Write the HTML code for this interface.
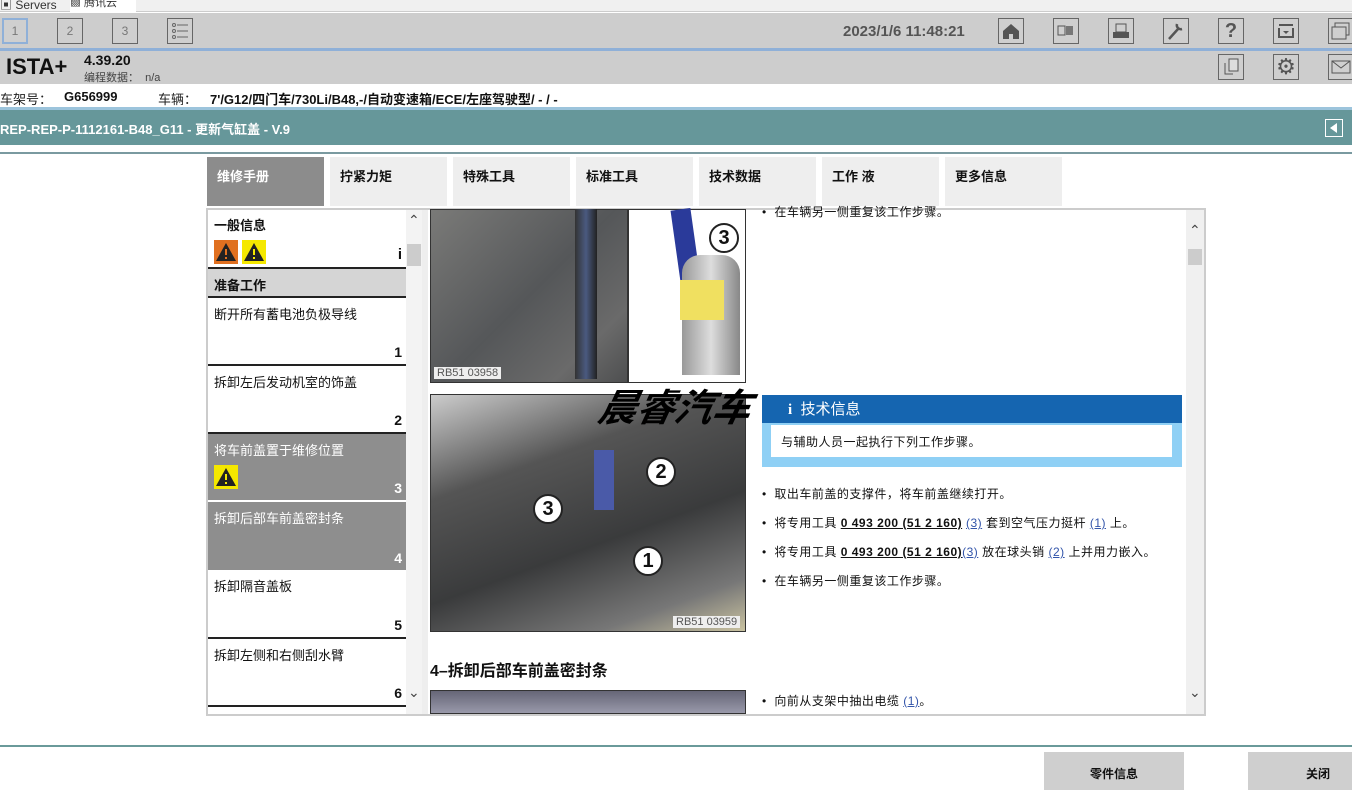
<!DOCTYPE html>
<html><head><meta charset="utf-8"><style>
*{margin:0;padding:0;box-sizing:border-box}
body{width:1352px;height:790px;overflow:hidden;background:#fff;position:relative;font-family:"Liberation Sans","Noto Sans CJK SC",sans-serif;color:#111}
.a{position:absolute}
.ib{position:absolute;width:26px;height:26px;border:1px solid #666;background:#cfcfcf;top:18px}
.tab{position:absolute;top:157px;height:49px;width:117px;background:#eee;font-size:13px;font-weight:bold;padding:9px 10px}
.li{position:absolute;left:208px;width:198px;font-size:13px;padding:6px 6px;border-bottom:2px solid #222}
.num{position:absolute;right:4px;bottom:4px;font-weight:bold;font-size:14px}
.warn{width:24px;height:24px;display:inline-block;position:relative}
.txt{position:absolute;left:762px;font-size:12px;letter-spacing:.5px}
.lk{color:#35a;text-decoration:underline}
.u{font-weight:bold;text-decoration:underline}
.circ{position:absolute;width:30px;height:30px;border:2px solid #222;border-radius:50%;background:#fff;font-size:20px;font-weight:bold;text-align:center;line-height:26px}
</style></head><body>
<div class="a" style="left:0;top:0;width:1352px;height:12px;background:#f0f0f0;border-bottom:1px solid #ccc"></div>
<div class="a" style="left:0;top:-4px;font-size:12px;color:#333">&#9635; Servers</div>
<div class="a" style="left:70px;top:0;width:66px;height:12px;background:#fff;font-size:11px;line-height:6px;color:#333">&#9641; 腾讯云</div>
<div class="a" style="left:0;top:13px;width:1352px;height:36px;background:#cdcdcd"></div>
<div class="a" style="left:0;top:48px;width:1352px;height:3px;background:#8fb0d8"></div>
<div class="ib" style="left:2px;border:2px solid #8fb0d8;font-size:12px;text-align:center;line-height:22px;color:#777">1</div>
<div class="ib" style="left:57px;font-size:12px;text-align:center;line-height:24px;color:#777">2</div>
<div class="ib" style="left:112px;font-size:12px;text-align:center;line-height:24px;color:#777">3</div>
<div class="ib" style="left:167px"><svg width="24" height="24"><g stroke="#666" fill="none"><circle cx="6" cy="6" r="1.5"/><circle cx="6" cy="12" r="1.5"/><circle cx="6" cy="18" r="1.5"/><path d="M9 6h11M9 12h11M9 18h11"/></g></svg></div>
<div class="a" style="left:843px;top:23px;font-size:15px;font-weight:bold;color:#555">2023/1/6 11:48:21</div>
<div class="ib" style="left:998px"><svg width="24" height="24"><path d="M4 12L12 5l8 7v8h-6v-5h-4v5H4z" fill="#555"/></svg></div>
<div class="ib" style="left:1053px"><svg width="24" height="24"><rect x="4" y="7" width="7" height="9" fill="none" stroke="#555"/><rect x="12" y="7" width="7" height="9" fill="#777"/></svg></div>
<div class="ib" style="left:1108px"><svg width="24" height="24"><rect x="7" y="5" width="10" height="8" fill="none" stroke="#555"/><rect x="4" y="13" width="16" height="6" fill="#555"/></svg></div>
<div class="ib" style="left:1163px"><svg width="24" height="24"><path d="M5 20L14 10M13 5a4 4 0 0 0 5 5" stroke="#555" stroke-width="2.5" fill="none"/></svg></div>
<div class="ib" style="left:1218px;font-size:20px;font-weight:bold;text-align:center;line-height:24px;color:#555">?</div>
<div class="ib" style="left:1273px"><svg width="24" height="24"><path d="M5 6h14M5 9v9h14V9" stroke="#555" fill="none" stroke-width="2"/><path d="M9 12h6l-3 3z" fill="#555"/></svg></div>
<div class="ib" style="left:1328px"><svg width="24" height="24"><rect x="6" y="4" width="14" height="12" fill="none" stroke="#555"/><rect x="3" y="8" width="14" height="12" fill="#cfcfcf" stroke="#555"/></svg></div>
<div class="a" style="left:0;top:51px;width:1352px;height:33px;background:#cdcdcd"></div>
<div class="a" style="left:6px;top:54px;font-size:22px;font-weight:bold">ISTA+</div>
<div class="a" style="left:84px;top:52px;font-size:14px;font-weight:bold">4.39.20</div>
<div class="a" style="left:84px;top:69px;font-size:11px;color:#444">编程数据： &nbsp;n/a</div>
<div class="ib" style="left:1218px;top:54px"><svg width="24" height="24"><rect x="10" y="4" width="9" height="12" fill="#ddd" stroke="#555"/><path d="M6 8v11h8" stroke="#555" fill="none"/></svg></div>
<div class="ib" style="left:1273px;top:54px;font-size:22px;text-align:center;line-height:24px;color:#555">⚙</div>
<div class="ib" style="left:1328px;top:54px"><svg width="24" height="24"><rect x="3" y="6" width="18" height="12" fill="none" stroke="#555"/><path d="M3 6l9 7 9-7" stroke="#555" fill="none"/></svg></div>
<div class="a" style="left:0;top:89px;font-size:13px;color:#222">车架号：</div>
<div class="a" style="left:64px;top:89px;font-size:13px;font-weight:bold">G656999</div>
<div class="a" style="left:158px;top:89px;font-size:13px;color:#222">车辆：</div>
<div class="a" style="left:210px;top:89px;font-size:13px;font-weight:bold">7'/G12/四门车/730Li/B48,-/自动变速箱/ECE/左座驾驶型/ - / -</div>
<div class="a" style="left:0;top:107px;width:1352px;height:3px;background:#9cc4dc"></div>
<div class="a" style="left:0;top:110px;width:1352px;height:35px;background:#66979a"></div>
<div class="a" style="left:0;top:119px;font-size:13px;font-weight:bold;color:#fff">REP-REP-P-1112161-B48_G11 - 更新气缸盖 - V.9</div>
<div class="a" style="left:1325px;top:119px;width:18px;height:18px;border:1px solid #fff"><svg width="16" height="16"><path d="M11 3v10L4 8z" fill="#fff"/></svg></div>
<div class="a" style="left:0;top:152px;width:1352px;height:2px;background:#7a9aa0"></div>
<div class="tab" style="left:207px;background:#8c8c8c;color:#fff">维修手册</div>
<div class="tab" style="left:330px">拧紧力矩</div>
<div class="tab" style="left:453px">特殊工具</div>
<div class="tab" style="left:576px">标准工具</div>
<div class="tab" style="left:699px">技术数据</div>
<div class="tab" style="left:822px">工作 液</div>
<div class="tab" style="left:945px">更多信息</div>
<div class="a" style="left:206px;top:208px;width:1000px;height:508px;border:2px solid #ccc"></div>
<div class="a" style="left:422px;top:210px;width:6px;height:504px;background:#eee"></div>
<div class="li" style="top:209px;height:60px;font-weight:bold">一般信息
<div style="margin-top:6px"><span class="warn" style="background:#e07020"><svg width="24" height="24"><path d="M12 3L22 21H2z" fill="#222"/><path d="M12 9v6M12 17v2" stroke="#e07020" stroke-width="2"/></svg></span> <span class="warn" style="background:#f5e800"><svg width="24" height="24"><path d="M12 3L22 21H2z" fill="#222"/><path d="M12 9v6M12 17v2" stroke="#f5e800" stroke-width="2"/></svg></span></div><span class="num" style="font-size:15px">i</span></div>
<div class="li" style="top:269px;height:29px;background:#d5d5d5;font-weight:bold">准备工作</div>
<div class="li" style="top:298px;height:68px">断开所有蓄电池负极导线<span class="num">1</span></div>
<div class="li" style="top:366px;height:68px">拆卸左后发动机室的饰盖<span class="num">2</span></div>
<div class="li" style="top:434px;height:68px;background:#8e8e8e;color:#fff;border-bottom-color:#fff">将车前盖置于维修位置<div style="margin-top:6px"><span class="warn" style="background:#f5e800"><svg width="24" height="24"><path d="M12 3L22 21H2z" fill="#222"/><path d="M12 9v6M12 17v2" stroke="#f5e800" stroke-width="2"/></svg></span></div><span class="num">3</span></div>
<div class="li" style="top:502px;height:68px;background:#8e8e8e;color:#fff;border-bottom:none">拆卸后部车前盖密封条<span class="num">4</span></div>
<div class="li" style="top:570px;height:69px">拆卸隔音盖板<span class="num">5</span></div>
<div class="li" style="top:639px;height:68px">拆卸左侧和右侧刮水臂<span class="num">6</span></div>
<div class="a" style="left:406px;top:210px;width:16px;height:504px;background:#f3f3f3"></div>
<div class="a" style="left:407px;top:244px;width:14px;height:22px;background:#ccc"></div>
<div class="a" style="left:408px;top:212px;font-size:14px;color:#444">&#8963;</div>
<div class="a" style="left:408px;top:684px;font-size:14px;color:#444">&#8964;</div>
<div class="a" style="left:430px;top:209px;width:198px;height:174px;background:linear-gradient(135deg,#7a7a78,#555759 50%,#6a6a6a 80%,#4e4f50);border:1px solid #333"></div>
<div class="a" style="left:575px;top:209px;width:22px;height:170px;background:linear-gradient(90deg,#333,#4a5a80,#222)"></div>
<div class="a" style="left:434px;top:367px;background:#eee;font-size:11px;padding:0 3px;color:#555">RB51 03958</div>
<div class="a" style="left:628px;top:209px;width:118px;height:174px;background:#fff;border:1px solid #333"></div>
<div class="a" style="left:676px;top:209px;width:20px;height:80px;background:#2a3a9a;transform:rotate(-8deg)"></div>
<div class="a" style="left:682px;top:255px;width:58px;height:120px;background:linear-gradient(90deg,#999,#ddd,#888);border-radius:18px 18px 0 0"></div>
<div class="a" style="left:680px;top:280px;width:44px;height:40px;background:#f0e060"></div>
<div class="circ" style="left:709px;top:223px">3</div>
<div class="a" style="left:430px;top:394px;width:316px;height:238px;background:linear-gradient(160deg,#ccc,#555 30%,#3a3b3c 60%,#777 85%,#c9c2a0);border:1px solid #333"></div>
<div class="a" style="left:594px;top:450px;width:20px;height:60px;background:#4a5aa8"></div>
<div class="circ" style="left:646px;top:457px">2</div>
<div class="circ" style="left:533px;top:494px">3</div>
<div class="circ" style="left:633px;top:546px">1</div>
<div class="a" style="left:673px;top:616px;background:#eee;font-size:11px;padding:0 3px;color:#555">RB51 03959</div>
<div class="a" style="left:600px;top:377px;font-size:38px;font-weight:bold;font-style:italic;transform:skewX(-12deg);color:#000">晨睿汽车</div>
<div class="a" style="left:430px;top:657px;font-size:16px;font-weight:bold">4–拆卸后部车前盖密封条</div>
<div class="a" style="left:430px;top:690px;width:316px;height:24px;background:linear-gradient(180deg,#667,#99a);border:1px solid #333"></div>
<div class="txt" style="top:203px">• &nbsp;在车辆另一侧重复该工作步骤。</div>
<div class="a" style="left:762px;top:395px;width:420px;height:28px;background:#1565b0;color:#fff;font-size:15px;padding:3px 26px"><b style="font-family:'Liberation Serif',serif">i</b>&nbsp;&nbsp;技术信息</div>
<div class="a" style="left:762px;top:423px;width:420px;height:44px;background:#8fd0f5"></div>
<div class="a" style="left:771px;top:425px;width:401px;height:32px;background:#fff;font-size:12px;padding:8px 10px;letter-spacing:.5px">与辅助人员一起执行下列工作步骤。</div>
<div class="txt" style="top:485px">• &nbsp;取出车前盖的支撑件，将车前盖继续打开。</div>
<div class="txt" style="top:514px">• &nbsp;将专用工具 <span class="u">0 493 200 (51 2 160)</span> <span class="lk">(3)</span> 套到空气压力挺杆 <span class="lk">(1)</span> 上。</div>
<div class="txt" style="top:543px">• &nbsp;将专用工具 <span class="u">0 493 200 (51 2 160)</span><span class="lk">(3)</span> 放在球头销 <span class="lk">(2)</span> 上并用力嵌入。</div>
<div class="txt" style="top:572px">• &nbsp;在车辆另一侧重复该工作步骤。</div>
<div class="txt" style="top:692px">• &nbsp;向前从支架中抽出电缆 <span class="lk">(1)</span>。</div>
<div class="a" style="left:1186px;top:210px;width:18px;height:504px;background:#f0f0f0"></div>
<div class="a" style="left:1188px;top:249px;width:14px;height:16px;background:#ccc"></div>
<div class="a" style="left:1189px;top:222px;font-size:14px;color:#444">&#8963;</div>
<div class="a" style="left:1189px;top:684px;font-size:14px;color:#444">&#8964;</div>
<div class="a" style="left:0;top:745px;width:1352px;height:2px;background:#6a9a9a"></div>
<div class="a" style="left:1044px;top:752px;width:140px;height:38px;background:#cfcfcf;font-size:12px;font-weight:bold;text-align:center;line-height:44px">零件信息</div>
<div class="a" style="left:1248px;top:752px;width:104px;height:38px;background:#cfcfcf;font-size:12px;font-weight:bold;text-align:center;line-height:44px;padding-left:36px">关闭</div>
</body></html>
